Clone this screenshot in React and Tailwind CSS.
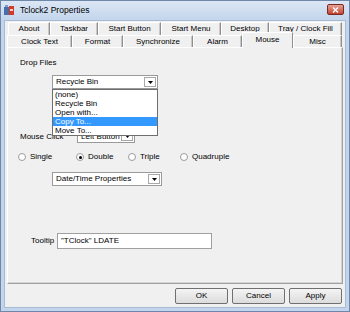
import React from 'react'

const row1 = [
  { label: 'About', w: 'w-[42px]' },
  { label: 'Taskbar', w: 'w-[48px]' },
  { label: 'Start Button', w: 'w-[63px]' },
  { label: 'Start Menu', w: 'w-[60px]' },
  { label: 'Desktop', w: 'w-[48px]' },
  { label: 'Tray / Clock Fill', w: 'w-[73px]' },
]

const row2 = [
  { label: 'Clock Text', w: 'w-[65px]' },
  { label: 'Format', w: 'w-[51px]' },
  { label: 'Synchronize', w: 'w-[70px]' },
  { label: 'Alarm', w: 'w-[49px]' },
  { label: 'Mouse', w: 'w-[51px]', active: true },
  { label: 'Misc', w: 'w-[49px]' },
]

const listItems = ['(none)', 'Recycle Bin', 'Open with...', 'Copy To...', 'Move To...']

function Arrow() {
  return (
    <div className="w-[12px] h-full flex items-center justify-center bg-white border border-[#a8a8a8]">
      <svg width="5" height="3" viewBox="0 0 5 3">
        <path d="M0 0H5L2.5 3Z" fill="#000" />
      </svg>
    </div>
  )
}

function Combo({ text, className }) {
  return (
    <div className={`flex items-stretch bg-white border border-[#9a9a9a] p-px ${className}`}>
      <div className="flex-1 flex items-center pl-[2px] leading-none whitespace-nowrap overflow-hidden">{text}</div>
      <Arrow />
    </div>
  )
}

function Radio({ label, checked, w }) {
  return (
    <div className={`flex items-center gap-[4px] ${w}`}>
      <div className="w-[8px] h-[8px] rounded-full bg-white border border-[#9c9c9c] flex items-center justify-center">
        {checked && <div className="w-[3px] h-[3px] rounded-full bg-black" />}
      </div>
      <span className="leading-none">{label}</span>
    </div>
  )
}

function Tab({ label, w, active }) {
  if (active) {
    return (
      <div className={`${w} h-[16px] relative z-10 bg-[#f0f0f0] border-t border-l border-white border-r border-r-[#8f8f8f] flex items-start justify-center pt-[3px] leading-none`}>
        {label}
      </div>
    )
  }
  return (
    <div className={`${w} h-[13px] border-t border-l border-white border-r border-r-[#8f8f8f] shadow-[inset_-1px_0_0_#c8c8c8] flex items-center justify-center leading-none`}>
      {label}
    </div>
  )
}

export default function App() {
  return (
    <div className="w-[350px] h-[312px] bg-[#c3d5ec] border border-[#6f87a8] flex flex-col font-['Liberation_Sans',Arial,sans-serif] text-[8px] text-black overflow-hidden">
      {/* title bar */}
      <div className="h-[19px] flex items-center pl-[3px] pr-[5px] bg-gradient-to-b from-[#dce7f5] to-[#c3d5ec]">
        <svg width="11" height="11" viewBox="0 0 11 11" className="mr-[5px]">
          <rect x="0" y="2" width="5" height="8" fill="#4a6fa8" />
          <rect x="5" y="1" width="5" height="9" fill="#d23a2a" />
          <rect x="1" y="0" width="3" height="2" fill="#7c9cd0" />
          <rect x="6" y="4" width="3" height="2" fill="#ffd0c0" />
        </svg>
        <span className="text-[8.5px] leading-none">Tclock2 Properties</span>
        <div className="ml-auto w-[17px] h-[11px] rounded-[2px] border border-[#7a2a22] bg-gradient-to-b from-[#e7a195] to-[#c2402f] flex items-center justify-center mt-[-2px]">
          <svg width="7" height="6" viewBox="0 0 7 6">
            <path d="M1 0.5L6 5.5M6 0.5L1 5.5" stroke="#fff" strokeWidth="1.4" />
          </svg>
        </div>
      </div>

      {/* body */}
      <div className="mx-[3px] bg-[#f0f0f0] border border-[#a9bbd3] flex flex-col pt-[1px] h-[288px]">
        <div className="flex ml-[3px]">
          {row1.map(t => <Tab key={t.label} {...t} />)}
        </div>
        <div className="flex items-end h-[13px] ml-[2px]">
          {row2.map(t => <Tab key={t.label} {...t} />)}
        </div>

        {/* tab panel */}
        <div className="-mt-px ml-[2px] w-[336px] h-[237px] border border-white border-r-[#a0a0a0] border-b-[#a0a0a0] shadow-[inset_-1px_-1px_0_#d4d4d4] flex flex-col">
          <div className="pt-[10px] pl-[12px] h-[20px] leading-[10px]">Drop Files</div>

          <div className="relative mt-[7px] ml-[44px] w-[106px]">
            <Combo text="Recycle Bin" className="h-[14px] w-[106px]" />
            <div className="absolute top-full left-0 z-20 w-[106px] bg-white border border-[#6e6e6e] flex flex-col">
              {listItems.map(item => (
                <div
                  key={item}
                  className={`h-[9px] pl-[2px] flex items-center leading-none ${item === 'Copy To...' ? 'bg-[#3399ff] text-white' : ''}`}
                >
                  {item}
                </div>
              ))}
            </div>
          </div>

          <div className="mt-[41px] h-[13px] flex items-center pl-[12px]">
            <span className="w-[57px] leading-none">Mouse Click</span>
            <Combo text="Left Button" className="h-[13px] w-[58px]" />
          </div>

          <div className="mt-[9px] h-[10px] flex items-center pl-[10px]">
            <Radio label="Single" w="w-[58px]" />
            <Radio label="Double" checked w="w-[52px]" />
            <Radio label="Triple" w="w-[52px]" />
            <Radio label="Quadruple" w="w-[70px]" />
          </div>

          <Combo text="Date/Time Properties" className="mt-[10px] ml-[44px] h-[14px] w-[110px]" />

          <div className="mt-[47px] h-[16px] flex items-center pl-[23px]">
            <span className="w-[26px] leading-none">Tooltip</span>
            <div className="w-[155px] h-[16px] bg-white border border-[#a0a0a0] flex items-center pl-[3px] leading-none">
              "TClock" LDATE
            </div>
          </div>
        </div>

        {/* buttons */}
        <div className="mt-[4px] flex gap-[4px] ml-[170px]">
          {['OK', 'Cancel', 'Apply'].map(b => (
            <div
              key={b}
              className="w-[53px] h-[16px] rounded-[2px] border border-[#707070] bg-gradient-to-b from-[#f4f4f4] to-[#dcdcdc] flex items-center justify-center leading-none"
            >
              {b}
            </div>
          ))}
        </div>
      </div>
    </div>
  )
}
